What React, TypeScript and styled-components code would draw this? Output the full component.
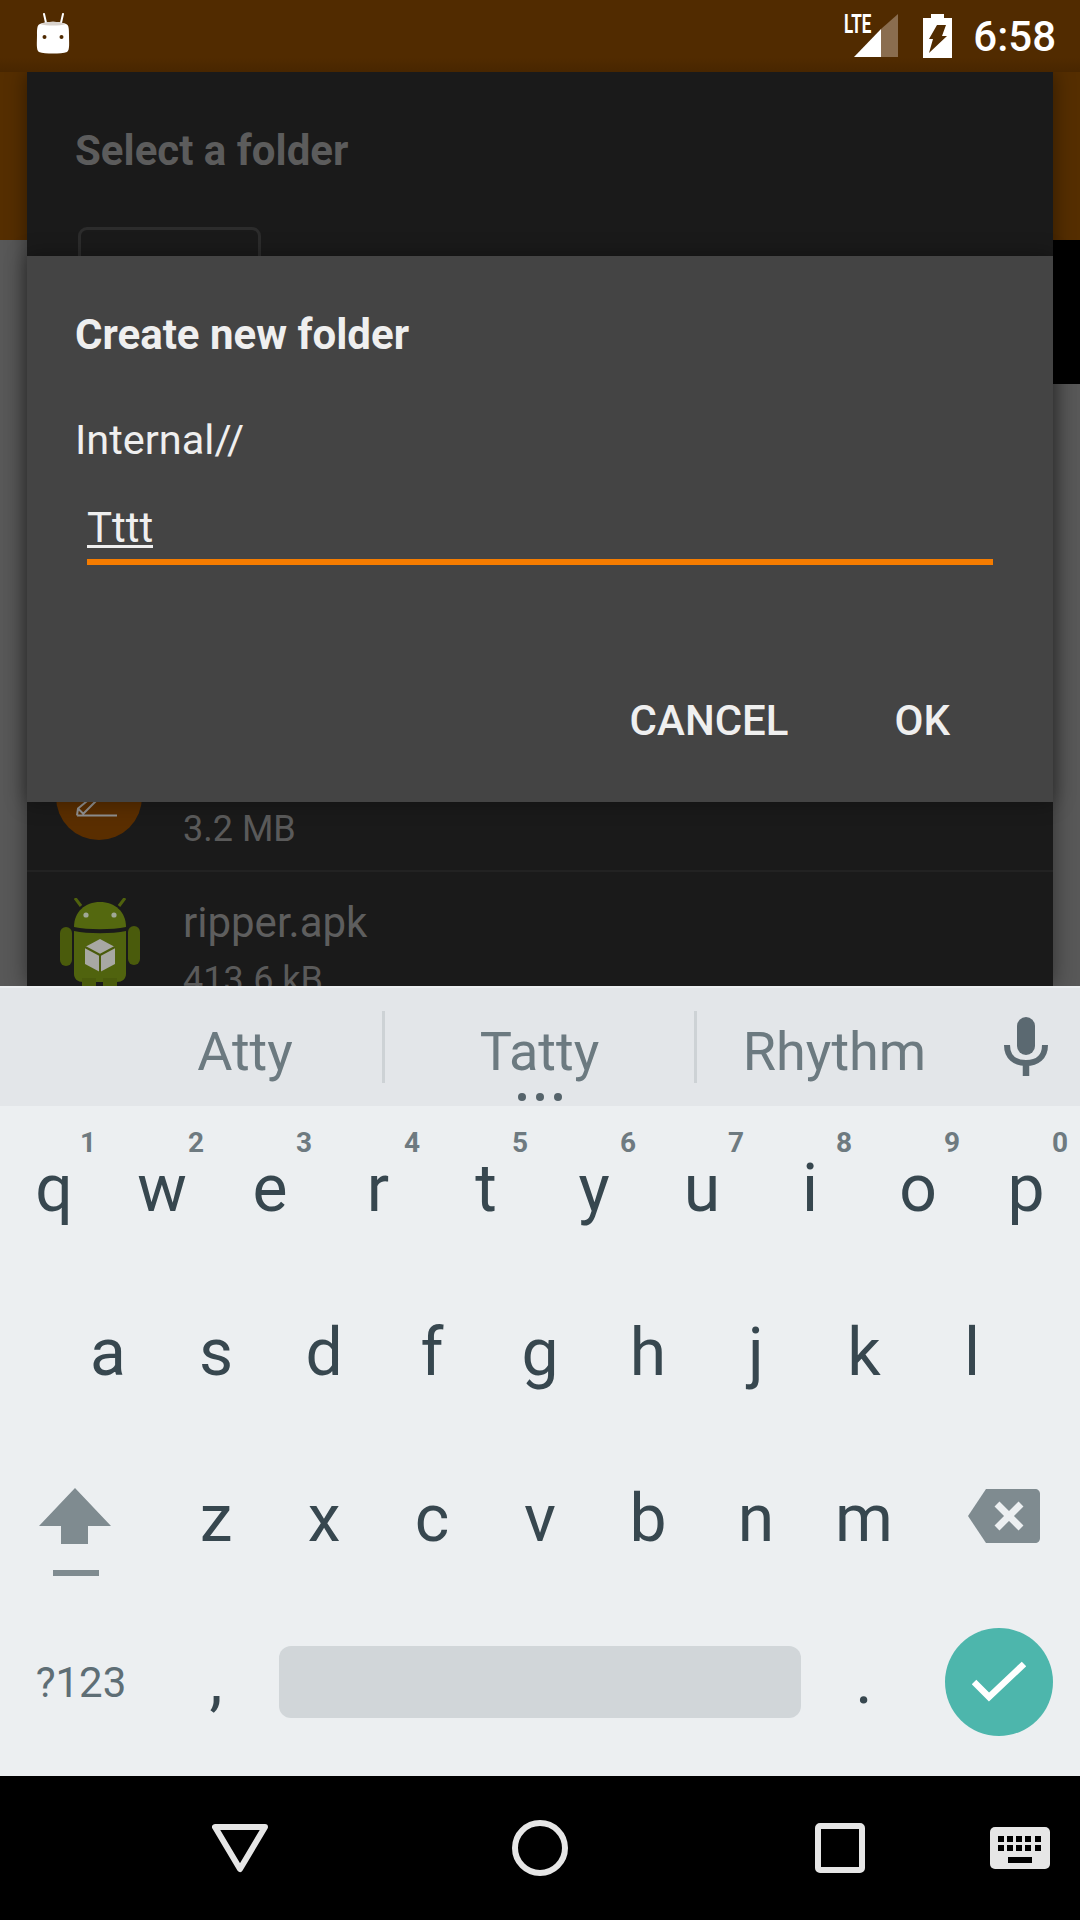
import styled, { createGlobalStyle } from 'styled-components'

const GlobalStyle = createGlobalStyle`
  html, body {
    margin: 0;
    padding: 0;
    background: #000;
    font-family: Roboto, "Noto Sans", sans-serif;
  }
  * {
    box-sizing: border-box;
  }
`

const rows = [
  [['q', '1'], ['w', '2'], ['e', '3'], ['r', '4'], ['t', '5'], ['y', '6'], ['u', '7'], ['i', '8'], ['o', '9'], ['p', '0']],
  [['a'], ['s'], ['d'], ['f'], ['g'], ['h'], ['j'], ['k'], ['l']],
]
const bottomLetters = ['z', 'x', 'c', 'v', 'b', 'n', 'm']

const CatIcon = () => (
  <svg width="34" height="42" viewBox="0 0 34 42">
    <path d="M8 1l2.5 11M27 1l-2.5 11" stroke="#fff" strokeWidth="2" strokeLinecap="round" />
    <path d="M1 22c0-6 0-10 3-11 8-3 18-3 26 0 3 1 3 5 3 11 0 8 1 15-2 17-6 2-22 2-28 0-3-2-2-9-2-17z" fill="#fff" />
    <path d="M4 11c8-3 18-3 26 0-6 2-20 2-26 0z" fill="#d8d2cc" />
    <circle cx="8.5" cy="24" r="2" fill="#4f2a00" />
    <circle cx="25.5" cy="24" r="2" fill="#4f2a00" />
  </svg>
)

const SignalIcon = () => (
  <svg width="44" height="44" viewBox="0 0 44 44">
    <path d="M27 15L44 0v43H27z" fill="#8a6d4f" />
    <path d="M27 15v28H0z" fill="#fff" />
  </svg>
)

const BatteryIcon = () => (
  <svg width="29" height="44" viewBox="0 0 29 44">
    <path
      fillRule="evenodd"
      fill="#fff"
      d="M8 0h13v4h8v40H0V4h8zM14 11h9l-4 11h5L6 39l4-14H6z"
    />
  </svg>
)

const PenIcon = () => (
  <svg width="86" height="43" viewBox="0 0 86 43">
    <path d="M21 18.5h40M21 18.5l1-7L36 0M27 17L44 0M22 11.5l5.5 5.5" stroke="#909090" strokeWidth="2" fill="none" />
  </svg>
)

const AndroidIcon = () => (
  <svg width="80" height="100" viewBox="0 0 80 100">
    <path d="M21 8l-6-8M59 8l6-8" stroke="#4f610d" strokeWidth="3" />
    <path d="M14 29C14 14 25 4 40 4s26 10 26 25c-14 3-38 3-52 0z" fill="#54680f" />
    <path d="M14 33c14 3 38 3 52 0v43c0 5-4 8-9 8H23c-5 0-9-3-9-8z" fill="#50630e" />
    <rect x="0" y="29" width="12" height="39" rx="6" fill="#4a5b0c" />
    <rect x="68" y="28" width="12" height="39" rx="6" fill="#4a5b0c" />
    <rect x="22" y="80" width="14" height="20" fill="#4a5b0c" />
    <rect x="43" y="80" width="14" height="20" fill="#4a5b0c" />
    <circle cx="26" cy="17" r="2.6" fill="#a0a896" />
    <circle cx="54" cy="17" r="2.6" fill="#a0a896" />
    <path d="M40 41l15 8v17l-15 8-15-8V49z" fill="#a8a8a4" />
    <path d="M25 49l15 8 15-8M40 57v17" stroke="#4a5b0c" strokeWidth="2" fill="none" />
  </svg>
)

const MicIcon = () => (
  <svg width="44" height="60" viewBox="0 0 44 60">
    <rect x="13" y="0" width="18" height="38" rx="9" fill="#5b6971" />
    <path d="M3 28c0 12 8 18 19 18s19-6 19-18" stroke="#5b6971" strokeWidth="6" fill="none" />
    <path d="M22 44v15" stroke="#5b6971" strokeWidth="6.5" />
  </svg>
)

const ShiftIcon = () => (
  <svg width="72" height="88" viewBox="0 0 72 88">
    <path d="M36 0l36 38H49v18H22V38H0z" fill="#7f8b90" />
    <rect x="14" y="82" width="46" height="6" fill="#7f8b90" />
  </svg>
)

const BackspaceIcon = () => (
  <svg width="72" height="54" viewBox="0 0 72 54">
    <path d="M18 0h49c3 0 5 2 5 5v44c0 3-2 5-5 5H18L0 27z" fill="#7f8b90" />
    <path d="M29 15l24 24M53 15L29 39" stroke="#eceff1" strokeWidth="7" />
  </svg>
)

const CheckIcon = () => (
  <svg width="54" height="42" viewBox="0 0 54 42">
    <path d="M2 21l15 15L52 3" stroke="#fff" strokeWidth="6.5" fill="none" />
  </svg>
)

const BackIcon = () => (
  <svg width="56" height="50" viewBox="0 0 56 50">
    <path d="M3 4h50L28 46z" stroke="#e6e6e6" strokeWidth="6" strokeLinejoin="round" fill="none" />
  </svg>
)

const HomeIcon = () => (
  <svg width="56" height="56" viewBox="0 0 56 56">
    <circle cx="28" cy="28" r="25" stroke="#e6e6e6" strokeWidth="6" fill="none" />
  </svg>
)

const RecentIcon = () => (
  <svg width="50" height="50" viewBox="0 0 50 50">
    <rect x="3" y="3" width="44" height="44" rx="2" stroke="#e6e6e6" strokeWidth="6" fill="none" />
  </svg>
)

const KeyboardIcon = () => (
  <svg width="60" height="42" viewBox="0 0 60 42">
    <rect width="60" height="42" rx="5" fill="#e6e6e6" />
    <path
      fill="#000"
      d="M8 9h6v6H8zM17 9h6v6h-6zM26 9h6v6h-6zM35 9h6v6h-6zM45 9h6v6h-6zM8 18h6v6H8zM17 18h6v6h-6zM26 18h6v6h-6zM35 18h6v6h-6zM45 18h6v6h-6zM18 30h24v6H18z"
    />
  </svg>
)

const App = () => (
  <>
    <GlobalStyle />
    <Screen>
      <StatusBar>
        <CatSlot>
          <CatIcon />
        </CatSlot>
        <StatusRight>
          <Signal>
            <LteLabel>LTE</LteLabel>
            <SignalIcon />
          </Signal>
          <BatteryIcon />
          <Clock>6:58</Clock>
        </StatusRight>
      </StatusBar>

      <Stage>
        <AppBar />
        <AppBody>
          <BlackBlock />
        </AppBody>

        <FolderDialog>
          <FolderTitle>Select a folder</FolderTitle>
          <FolderChip />
          <FileList>
            <FileRow>
              <FileBadge>
                <PenIcon />
              </FileBadge>
              <FileText>
                <FileName />
                <FileSize>3.2 MB</FileSize>
              </FileText>
            </FileRow>
            <FileRow>
              <FileThumb>
                <AndroidIcon />
              </FileThumb>
              <FileText>
                <FileName>ripper.apk</FileName>
                <FileSize>413.6 kB</FileSize>
              </FileText>
            </FileRow>
          </FileList>
        </FolderDialog>

        <CreateDialog>
          <CreateTitle>Create new folder</CreateTitle>
          <PathLabel>Internal//</PathLabel>
          <NameField>
            <TypedText>Tttt</TypedText>
          </NameField>
          <DialogActions>
            <ActionButton>CANCEL</ActionButton>
            <ActionButton>OK</ActionButton>
          </DialogActions>
        </CreateDialog>
      </Stage>

      <Keyboard>
        <Suggestions>
          <Suggestion>Atty</Suggestion>
          <Suggestion $divided>
            Tatty
            <MoreDots>
              <i />
              <i />
              <i />
            </MoreDots>
          </Suggestion>
          <Suggestion $divided>Rhythm</Suggestion>
          <MicCell>
            <MicIcon />
          </MicCell>
        </Suggestions>

        {rows.map((row) => (
          <KeyRow key={row[0][0]}>
            {row.map(([letter, hint]) => (
              <Key key={letter}>
                {letter}
                {hint && <KeyHint>{hint}</KeyHint>}
              </Key>
            ))}
          </KeyRow>
        ))}

        <KeyRow $height={168}>
          <WideKey $shift={-6} $drop={12}>
            <ShiftIcon />
          </WideKey>
          {bottomLetters.map((letter) => (
            <Key key={letter}>{letter}</Key>
          ))}
          <WideKey $shift={5} $drop={-4}>
            <BackspaceIcon />
          </WideKey>
        </KeyRow>

        <KeyRow $height={156}>
          <WideKey>
            <SymbolsLabel>?123</SymbolsLabel>
          </WideKey>
          <Key>,</Key>
          <SpaceKey>
            <SpaceBar />
          </SpaceKey>
          <Key>.</Key>
          <WideKey>
            <EnterButton>
              <CheckIcon />
            </EnterButton>
          </WideKey>
        </KeyRow>
      </Keyboard>

      <NavBar>
        <NavItem $gap={212}>
          <BackIcon />
        </NavItem>
        <NavItem $gap={244}>
          <HomeIcon />
        </NavItem>
        <NavItem $gap={247}>
          <RecentIcon />
        </NavItem>
        <NavItem $gap={125}>
          <KeyboardIcon />
        </NavItem>
      </NavBar>
    </Screen>
  </>
)

const Screen = styled.div`
  width: 1080px;
  height: 1920px;
  display: flex;
  flex-direction: column;
  overflow: hidden;
`

const StatusBar = styled.header`
  flex: none;
  height: 72px;
  padding: 0 24px 0 36px;
  display: flex;
  align-items: center;
  justify-content: space-between;
  background: linear-gradient(#512b00 80%, #482600);
  z-index: 2;
`

const CatSlot = styled.div`
  display: flex;
  margin-top: -4px;
`

const StatusRight = styled.div`
  display: flex;
  align-items: center;
`

const Signal = styled.div`
  position: relative;
  display: flex;
  margin-right: 25px;
`

const LteLabel = styled.span`
  position: absolute;
  left: -10px;
  top: -3px;
  font-size: 25px;
  line-height: 28px;
  font-weight: 700;
  color: #fff;
  transform: scaleX(0.68);
  transform-origin: left center;
`

const Clock = styled.span`
  margin-left: 21px;
  font-size: 42px;
  font-weight: 500;
  color: #fff;
`

const Stage = styled.main`
  position: relative;
  flex: none;
  height: 914px;
  display: flex;
  flex-direction: column;
  overflow: hidden;
  background: #555;
`

const AppBar = styled.div`
  flex: none;
  height: 168px;
  background: #552e00;
`

const AppBody = styled.div`
  flex: 1;
  display: flex;
  justify-content: flex-end;
  background: #585858;
`

const BlackBlock = styled.div`
  width: 27px;
  height: 144px;
  background: #000;
`

const FolderDialog = styled.section`
  position: absolute;
  left: 27px;
  top: 0;
  width: 1026px;
  height: 914px;
  padding: 0 0 0 48px;
  background: #1a1a1a;
  box-shadow: 0 0 20px rgba(0, 0, 0, 0.45);
`

const FolderTitle = styled.h2`
  margin: 0;
  padding-top: 54px;
  font-size: 42px;
  line-height: 50px;
  font-weight: 700;
  color: #5c5c5c;
`

const FolderChip = styled.div`
  width: 183px;
  height: 100px;
  margin: 51px 0 0 3px;
  border: 3px solid #2c2c2c;
  border-radius: 9px;
`

const FileList = styled.div`
  margin: 394px 0 0 -48px;
`

const FileRow = styled.div`
  height: 151px;
  padding-left: 29px;
  display: flex;
  align-items: flex-start;
  border-bottom: 2px solid #222;
`

const FileBadge = styled.div`
  flex: none;
  width: 86px;
  height: 86px;
  padding-top: 43px;
  margin-top: 33px;
  border-radius: 50%;
  background: #5a2e00;
`

const FileThumb = styled.div`
  flex: none;
  width: 86px;
  height: 100px;
  margin-top: 26px;
  margin-left: 4px;
  margin-right: -4px;
`

const FileText = styled.div`
  margin-left: 41px;
  padding-top: 26px;
`

const FileName = styled.div`
  min-height: 50px;
  font-size: 42px;
  line-height: 50px;
  color: #5e5e5e;
`

const FileSize = styled.div`
  margin-top: 7px;
  font-size: 36px;
  line-height: 50px;
  color: #5a5a5a;
`

const CreateDialog = styled.section`
  position: absolute;
  left: 27px;
  top: 184px;
  width: 1026px;
  height: 546px;
  padding: 54px 60px 0 48px;
  background: #444;
  box-shadow: 0 0 20px rgba(0, 0, 0, 0.35);
`

const CreateTitle = styled.h2`
  margin: 0;
  font-size: 42px;
  line-height: 50px;
  font-weight: 700;
  color: #efefef;
`

const PathLabel = styled.div`
  margin-top: 55px;
  font-size: 41.5px;
  line-height: 50px;
  color: #efefef;
`

const NameField = styled.div`
  height: 62px;
  margin: 38px 0 0 12px;
  border-bottom: 6px solid #f57c00;
  font-size: 42px;
  line-height: 50px;
  color: #efefef;
`

const TypedText = styled.span`
  display: inline-block;
  height: 42px;
  line-height: 44px;
  border-bottom: 3px solid #efefef;
`

const DialogActions = styled.div`
  display: flex;
  justify-content: flex-end;
  gap: 106px;
  margin-top: 131px;
  padding-right: 43px;
`

const ActionButton = styled.span`
  font-size: 42px;
  line-height: 50px;
  font-weight: 500;
  color: #efefef;
`

const Keyboard = styled.section`
  flex: none;
  height: 790px;
  padding-top: 2px;
  background: #eceff1;
`

const Suggestions = styled.div`
  height: 118px;
  margin-bottom: 2px;
  padding-left: 108px;
  display: grid;
  grid-template-columns: 274px 312px 278px 108px;
  align-items: center;
  background: #e3e6e9;
`

const Suggestion = styled.div<{ $divided?: boolean }>`
  position: relative;
  height: 72px;
  padding-top: 8px;
  display: flex;
  align-items: center;
  justify-content: center;
  border-left: ${({ $divided }) => ($divided ? '3px solid #cdd2d5' : 'none')};
  font-size: 54px;
  color: #6c7a80;
`

const MoreDots = styled.div`
  position: absolute;
  bottom: -18px;
  left: 50%;
  display: flex;
  gap: 10px;
  transform: translateX(-50%);

  > i {
    width: 8px;
    height: 8px;
    border-radius: 50%;
    background: #56646b;
  }
`

const MicCell = styled.div`
  display: flex;
  justify-content: center;
  margin-left: -1px;
`

const KeyRow = styled.div<{ $height?: number }>`
  height: ${({ $height }) => $height ?? 164}px;
  display: flex;
  justify-content: center;
`

const Key = styled.div`
  position: relative;
  flex: none;
  width: 108px;
  padding-bottom: 4px;
  display: flex;
  align-items: center;
  justify-content: center;
  font-size: 66px;
  color: #37474f;
`

const KeyHint = styled.span`
  position: absolute;
  top: 18px;
  right: 12px;
  font-size: 28px;
  line-height: 34px;
  font-weight: 700;
  color: #6e7a80;
`

const WideKey = styled.div<{ $shift?: number; $drop?: number }>`
  flex: none;
  width: 162px;
  display: flex;
  align-items: center;
  justify-content: center;

  > svg {
    transform: translate(${({ $shift }) => $shift ?? 0}px, ${({ $drop }) => $drop ?? 0}px);
  }
`

const SymbolsLabel = styled.span`
  font-size: 42px;
  color: #5e6e75;
`

const SpaceKey = styled.div`
  flex: none;
  width: 540px;
  padding: 0 9px;
  display: flex;
  align-items: center;
`

const SpaceBar = styled.div`
  width: 100%;
  height: 72px;
  border-radius: 12px;
  background: #d1d6d9;
`

const EnterButton = styled.div`
  width: 108px;
  height: 108px;
  display: flex;
  align-items: center;
  justify-content: center;
  border-radius: 50%;
  background: #4db6ac;
`

const NavBar = styled.nav`
  flex: none;
  height: 144px;
  display: flex;
  align-items: center;
  background: #000;
`

const NavItem = styled.div<{ $gap: number }>`
  display: flex;
  margin-left: ${({ $gap }) => $gap}px;
`

export default App
